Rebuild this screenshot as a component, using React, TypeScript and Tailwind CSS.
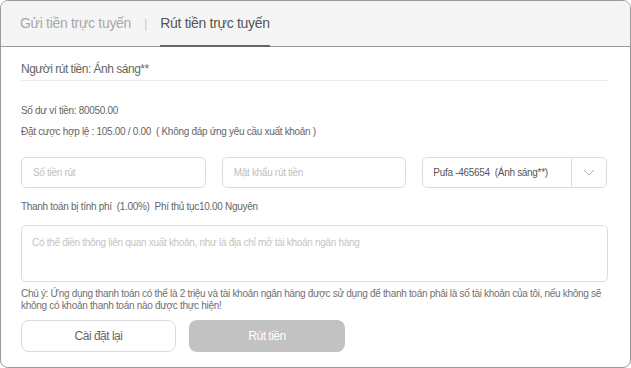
export default function App() {
  return (
    <div className="h-[368px] w-[631px] bg-white font-['Liberation_Sans',Arial,sans-serif]">
      <div className="flex h-[368px] w-[631px] flex-col overflow-hidden rounded-[8px] border border-[#9a9a9a]">
        <div className="flex h-[46px] shrink-0 items-stretch border-b border-[#9a9a9a] bg-[#f5f5f5] pl-[19px] text-[14px] tracking-[-0.3px]">
          <div className="flex items-center text-[#a8a8a8]">Gửi tiền trực tuyến</div>
          <div className="flex items-center px-[13px] text-[13px] text-[#cccccc]">|</div>
          <div className="relative flex items-center text-[#555]">
            Rút tiền trực tuyến
            <span className="absolute bottom-[-1px] left-0 right-0 h-[2px] bg-[#666]" />
          </div>
        </div>

        <div className="flex flex-col pl-[20px] pr-[22px] tracking-[-0.3px]">
          <div className="flex h-[34px] items-center border-b border-[#ececec] pt-[11px] text-[12px] tracking-[-0.5px] text-[#666]">
            Người rút tiền: Ánh sáng**
          </div>

          <div className="mt-[23px] text-[10px] leading-[14px] text-[#666]">Số dư ví tiền: 80050.00</div>
          <div className="mt-[7px] text-[10px] leading-[14px] text-[#666]">
            Đặt cược hợp lệ : 105.00 / 0.00 &nbsp;( Không đáp ứng yêu cầu xuất khoản )
          </div>

          <div className="mt-[18px] grid grid-cols-3 gap-[16px] pr-[1px]">
            <div className="flex h-[31px] items-center rounded-[5px] border border-[#dcdcdc] px-[11px] text-[10px] text-[#c0c0c0]">
              Số tiền rút
            </div>
            <div className="flex h-[31px] items-center rounded-[5px] border border-[#dcdcdc] px-[11px] text-[10px] text-[#c0c0c0]">
              Mật khẩu rút tiền
            </div>
            <div className="flex h-[31px] items-stretch rounded-[5px] border border-[#dcdcdc]">
              <div className="flex flex-1 items-center px-[10px] text-[10px] text-[#555]">Pufa -465654 &nbsp;(Ánh sáng**)</div>
              <div className="flex w-[35px] items-center justify-center border-l border-[#dcdcdc]">
                <svg width="12" height="7" viewBox="0 0 12 7" fill="none">
                  <path d="M1 1l5 5 5-5" stroke="#b5b5b5" strokeWidth="1" />
                </svg>
              </div>
            </div>
          </div>

          <div className="mt-[12px] text-[10px] leading-[14px] text-[#666]">
            Thanh toán bị tính phí &nbsp;(1.00%) &nbsp;Phí thủ tục10.00 Nguyên
          </div>

          <div className="mt-[11px] h-[57px] rounded-[5px] border border-[#dcdcdc] px-[10px] pt-[9px] text-[10px] text-[#c4c4c4]">
            Có thể điền thông liên quan xuất khoản, như là địa chỉ mở tài khoản ngân hàng
          </div>

          <div className="mt-[6px] text-[10px] leading-[12px] text-[#707070]">
            Chú ý: Ứng dụng thanh toán có thể là 2 triệu và tài khoản ngân hàng được sử dụng để thanh toán phải là số tài khoản của tôi, nếu không sẽ không có khoản thanh toán nào được thực hiện!
          </div>

          <div className="mt-[8px] flex gap-[13px]">
            <div className="flex h-[32px] w-[155px] items-center justify-center rounded-[8px] border border-[#dcdcdc] text-[12px] tracking-[-0.5px] text-[#666]">
              Cài đặt lại
            </div>
            <div className="flex h-[32px] w-[156px] items-center justify-center rounded-[8px] bg-[#c2c2c2] text-[12px] tracking-[-0.5px] text-white">
              Rút tiền
            </div>
          </div>
        </div>
      </div>
    </div>
  );
}
